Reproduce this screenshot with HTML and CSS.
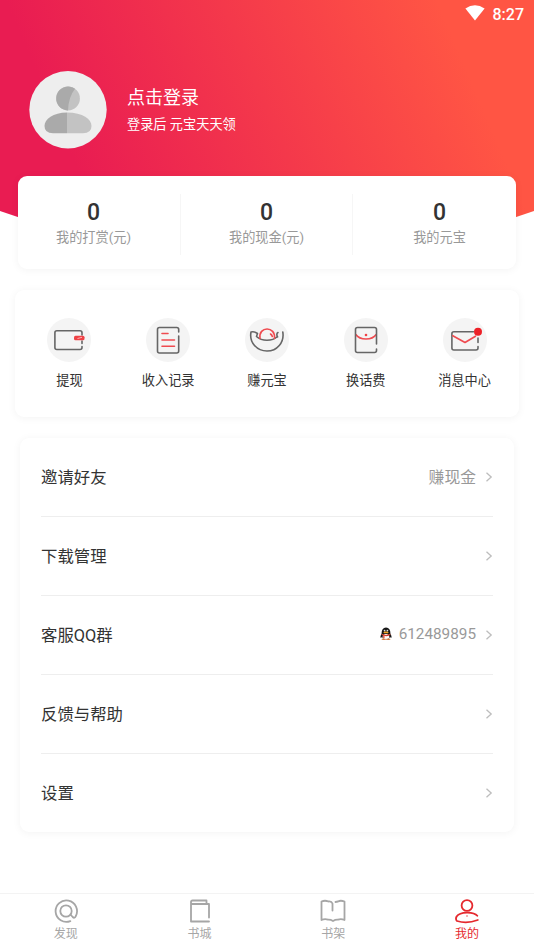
FILE: index.html
```html
<!DOCTYPE html>
<html lang="zh-CN">
<head>
<meta charset="utf-8">
<title>我的</title>
<link rel="stylesheet" href="styles.css">
</head>
<body>
<div class="app">
  <header class="hero">
    <div class="status">
      <svg width="20" height="16" viewBox="0 0 20 16"><path d="M.4 3.6Q10-3.2 19.6 3.6L10 15.4Z" fill="#fff"/></svg>
      <span>8:27</span>
    </div>
    <div class="profile">
      <svg class="avatar" width="78" height="78" viewBox="0 0 78 78">
        <circle cx="39" cy="38.700" r="38.700" fill="#eee"/>
        <circle cx="39" cy="27.500" r="11.900" fill="#c3c3c3"/>
        <path d="M46 17.800A11.900 11.900 0 1 0 39 39.400Q39.500 26 46 17.800Z" fill="#aaa"/>
        <path d="M38 41.500C54 41.500 62.500 48 62.500 55Q62.500 62.300 54 62.300H38Z" fill="#c3c3c3"/>
        <path d="M38 41.500C24 41.500 15.500 48 15.500 55Q15.500 62.300 24 62.300H38Z" fill="#aaa"/>
      </svg>
      <div class="login">
        <div class="login-title">点击登录</div>
        <div class="login-sub">登录后 元宝天天领</div>
      </div>
    </div>
  </header>

  <section class="card stats">
    <div class="stat"><b>0</b><span>我的打赏(元)</span></div>
    <div class="stat"><b>0</b><span>我的现金(元)</span></div>
    <div class="stat"><b>0</b><span>我的元宝</span></div>
  </section>

  <section class="card actions">
    <div class="action">
      <svg width="44" height="44" viewBox="0 0 44 44"><circle cx="22" cy="22" r="22" fill="#f4f4f4"/><path class="ink" d="M35 17V14.800a2 2 0 0 0-2-2H9.900a2 2 0 0 0-2 2V29.500a2 2 0 0 0 2 2H33a2 2 0 0 0 2-2V28.500M35 23v2.500"/><rect x="27" y="17.700" width="10.500" height="4.600" rx="1.500" fill="#ef4145"/><path d="M30.500 20.500L35 19.300" stroke="#ffb1b1" stroke-width="1"/></svg>
      <span>提现</span>
    </div>
    <div class="action">
      <svg width="44" height="44" viewBox="0 0 44 44"><circle cx="22" cy="22" r="22" fill="#f4f4f4"/><path class="ink" d="M32.700 14v-2.500a2 2 0 0 0-2-2H13.500a2 2 0 0 0-2 2v21.500a2 2 0 0 0 2 2h17.200a2 2 0 0 0 2-2V18"/><path class="red" d="M16 15.500h6M16 22h12.500M16 28.300h12.500"/></svg>
      <span>收入记录</span>
    </div>
    <div class="action">
      <svg width="44" height="44" viewBox="0 0 44 44"><circle cx="22" cy="22" r="22" fill="#f4f4f4"/><path class="ink" d="M11.500 18.500L12.500 15.500Q9 13 6 14C4 24.500 12 33 22 33C32 33 39.500 24.500 37.800 14M33 14.500Q31 15.500 32.500 19M11.500 18.500C17 23.500 27 23.500 32.500 18.500"/><path class="red" d="M15 20.500C13 7.800 31 7.800 29.500 20.500M25.500 16q1.500 1 1.800 2.500"/></svg>
      <span>赚元宝</span>
    </div>
    <div class="action">
      <svg width="44" height="44" viewBox="0 0 44 44"><circle cx="22" cy="22" r="22" fill="#f4f4f4"/><path class="red" d="M11.800 16.500C16 22.500 28 22.500 32.200 16.500"/><circle cx="22" cy="17" r="1.300" fill="#ef4145"/><path class="ink" d="M32.500 26V11.500a2 2 0 0 0-2-2h-17a2 2 0 0 0-2 2V32.500a2 2 0 0 0 2 2h17a2 2 0 0 0 2-2V31"/></svg>
      <span>换话费</span>
    </div>
    <div class="action">
      <svg width="44" height="44" viewBox="0 0 44 44"><circle cx="22" cy="22" r="22" fill="#f4f4f4"/><path class="ink" d="M30.500 13.700H10.900a2 2 0 0 0-2 2V30a2 2 0 0 0 2 2H33a2 2 0 0 0 2-2V28.500M35 20v4.500"/><path class="red" d="M9.800 17.700L22 24.500L32.500 18.200"/><circle cx="35" cy="13.700" r="4" fill="#ed2128"/></svg>
      <span>消息中心</span>
    </div>
  </section>

  <section class="card menu">
    <div class="row"><span>邀请好友</span><span class="value">赚现金</span><svg class="chev" width="8" height="12" viewBox="0 0 8 12"><path d="M1.500 1.700L6.200 6L1.500 10.300"/></svg></div>
    <div class="row"><span>下载管理</span><span class="value"></span><svg class="chev" width="8" height="12" viewBox="0 0 8 12"><path d="M1.500 1.700L6.200 6L1.500 10.300"/></svg></div>
    <div class="row"><span>客服QQ群</span><span class="value number">
      <svg class="qq" width="12" height="14" viewBox="0 0 12 14"><path d="M1.500 7Q-.2 9.500.9 11L2 10Q3 12.500 6 12.500T10 10L11.100 11Q12.200 9.500 10.500 7Q10.500.5 6 .5T1.500 7Z" fill="#171717"/><ellipse cx="6" cy="9.700" rx="3.300" ry="2.800" fill="#fff"/><circle cx="4.600" cy="3.600" r=".9" fill="#ddd"/><circle cx="7.400" cy="3.600" r=".9" fill="#ddd"/><ellipse cx="6" cy="5.400" rx="2.600" ry=".9" fill="#f5a623"/><path d="M1.700 6.800Q6 9 10.300 6.800V8Q6 10 4.500 8.800V11H3.200V8.500L1.700 8Z" fill="#dd3f2c"/><ellipse cx="3.700" cy="12.300" rx="2.200" ry=".8" fill="#d9793a"/><ellipse cx="8.300" cy="12.300" rx="2.200" ry=".8" fill="#d9793a"/></svg>612489895</span><svg class="chev" width="8" height="12" viewBox="0 0 8 12"><path d="M1.500 1.700L6.200 6L1.500 10.300"/></svg></div>
    <div class="row"><span>反馈与帮助</span><span class="value"></span><svg class="chev" width="8" height="12" viewBox="0 0 8 12"><path d="M1.500 1.700L6.200 6L1.500 10.300"/></svg></div>
    <div class="row"><span>设置</span><span class="value"></span><svg class="chev" width="8" height="12" viewBox="0 0 8 12"><path d="M1.500 1.700L6.200 6L1.500 10.300"/></svg></div>
  </section>

  <nav class="tabs">
    <div class="tab"><svg width="26" height="26" viewBox="0 0 26 26"><path d="M17.300 23.100A10.700 10.700 0 1 1 22.700 18.300Q21.500 20.800 19.700 19L17.500 16.500"/><circle cx="13" cy="13" r="5.700"/></svg><span>发现</span></div>
    <div class="tab"><svg width="26" height="26" viewBox="0 0 26 26"><path d="M22 23.500H4V4Q4 2.500 5.500 2.500H19.500V5.800M4 6H22V19.500"/></svg><span>书城</span></div>
    <div class="tab"><svg width="26" height="26" viewBox="0 0 26 26"><path d="M12.500 12.500V5.500Q11.500 3 8.500 3.500Q5 2 1.500 3.500V22Q5 20.500 8 21.700Q10.500 21.500 13 23Q15.500 21.500 18 21.700Q21 20.500 24.500 22V3.500Q20.500 2 18 3.500L15.500 4"/></svg><span>书架</span></div>
    <div class="tab active"><svg width="26" height="26" viewBox="0 0 26 26"><circle cx="13" cy="7.500" r="5.400"/><path d="M23.300 17.800C20 13.500 6 13.200 2.600 18.500Q1.200 21.200 3 23Q13 26 23.800 22"/><circle class="dot" cx="13" cy="18" r=".7"/></svg><span>我的</span></div>
  </nav>
</div>
</body>
</html>
```

FILE: styles.css
```css
* { box-sizing: border-box; }
body {
  margin: 0;
  background: #fff;
  color: #333;
  font-family: Roboto, "Noto Sans CJK SC", sans-serif;
}
svg { display: block; flex: none; }
.app {
  width: 534px;
  height: 949px;
  display: flex;
  flex-direction: column;
  overflow: hidden;
}
.hero {
  height: 260px;
  flex: none;
  margin-bottom: -84px;
  background: linear-gradient(67deg, #e91c52 18%, #ff5544 85%);
  clip-path: polygon(0 0, 100% 0, 100% 211px, 75% 256px, 25% 256px, 0 211px);
  color: #fff;
}
.status {
  height: 28px;
  display: flex;
  justify-content: flex-end;
  align-items: center;
  gap: 8px;
  padding-right: 10px;
  font-size: 16px;
  font-weight: 500;
}
.status svg { margin-top: -2px; }
.profile {
  display: flex;
  align-items: center;
  gap: 20px;
  padding: 43px 0 0 29px;
}
.login { padding-top: 3px; }
.login-title { font-size: 18px; line-height: 26px; margin-top: -3px; }
.login-sub { font-size: 13.200px; line-height: 20px; margin-top: 4px; }
.card {
  position: relative;
  flex: none;
  background: #fff;
  border-radius: 9px;
  box-shadow: 0 1px 8px rgba(0, 0, 0, .05);
}
.stats {
  height: 93px;
  margin: 0 18px;
  padding: 18px 0 14px;
  display: grid;
  grid-template-columns: 162px 172px 164px;
}
.stat {
  display: flex;
  flex-direction: column;
  align-items: center;
}
.stat:first-child { padding-right: 11px; }
.stat:last-child { padding-left: 10px; }
.stat + .stat { border-left: 1px solid #f6f6f6; }
.stat b { font-size: 23px; line-height: 28px; margin-top: 5px; font-weight: 500; }
.stat span { font-size: 13.200px; line-height: 22px; color: #999; }
.actions {
  height: 127px;
  margin: 21px 15px 0;
  padding: 28px 5px 0;
  display: grid;
  grid-template-columns: repeat(5, 1fr);
}
.action {
  display: flex;
  flex-direction: column;
  align-items: center;
  gap: 9px;
  font-size: 13.200px;
  line-height: 20px;
}
.ink, .red {
  fill: none;
  stroke: #666;
  stroke-width: 1.6;
  stroke-linecap: round;
  stroke-linejoin: round;
}
.red { stroke: #ef4b50; }
.menu {
  margin: 21px 20px 0;
  height: 394px;
  padding: 0 21px;
}
.row {
  height: 79px;
  display: flex;
  align-items: center;
  border-bottom: 1px solid #eee;
  font-size: 16.400px;
}
.row > span { padding-bottom: 2px; }
.row:last-child { height: 78px; border: 0; }
.value {
  margin-left: auto;
  margin-right: 9px;
  display: flex;
  align-items: center;
  gap: 7px;
  color: #999;
  font-size: 15.800px;
}
.number { font-size: 15.300px; }
.chev path {
  fill: none;
  stroke: #bdbdbd;
  stroke-width: 1.300;
}
.tabs {
  margin-top: auto;
  height: 56px;
  display: grid;
  grid-template-columns: repeat(4, 1fr);
  border-top: 1px solid #f3f3f3;
  margin-left: -1px;
}
.tab {
  display: flex;
  flex-direction: column;
  align-items: center;
  padding-top: 4px;
  color: #a6a6a6;
  font-size: 12px;
  line-height: 20px;
}
.tab path, .tab circle {
  fill: none;
  stroke: currentColor;
  stroke-width: 1.800;
  stroke-linecap: round;
  stroke-linejoin: round;
}
.tab .dot { fill: currentColor; stroke: none; }
.active { color: #e5292e; }
```
